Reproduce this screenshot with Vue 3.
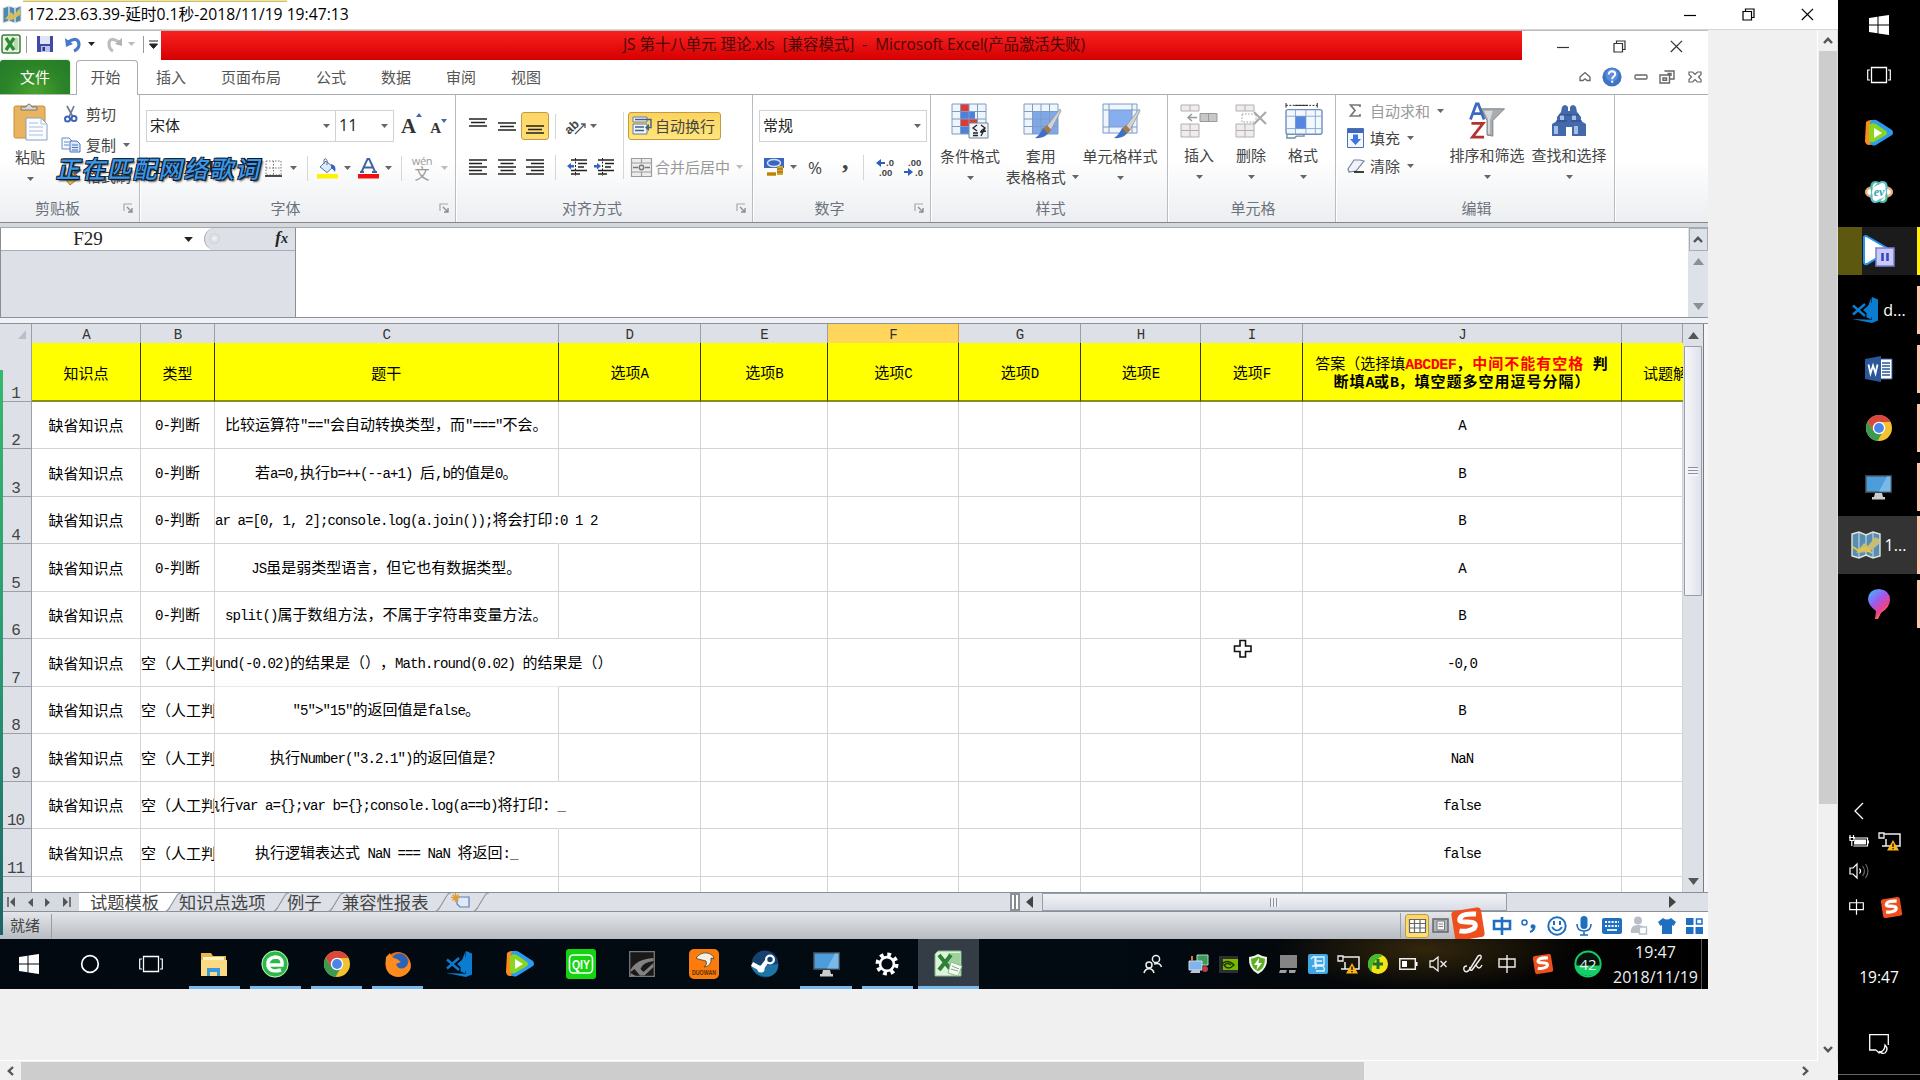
<script setup>
import { h } from 'vue'

const chrome = `<circle cx="14" cy="14" r="13" fill="#f2c230"/><path d="M14 14 2.7 7.6A13 13 0 0 1 25.3 7.6L14 8z" fill="#d9483b"/><path d="M2.7 7.6 8.2 17l5.8-3 0-6h11.3A13 13 0 0 0 2.7 7.6z" fill="#d9483b"/><path d="M2.7 7.6A13 13 0 0 0 12.5 26.9L17 19 14 17 8.200 17z" fill="#3a9a51"/><circle cx="14" cy="14" r="6.2" fill="#fff"/><circle cx="14" cy="14" r="4.9" fill="#4a86ea"/>`
const vscode = `<path d="M21 1 27 3.5v21L21 27 1 23l20 .8zM21 6.5v15l-9-7.5z" fill="#0a7dd0"/><path d="M2 9.5 14 20M2 18.500 14 8" stroke="#0a7dd0" stroke-width="2.400" fill="none"/><path d="M20.500 1v22.500l-5-2V14z" fill="#0a7dd0"/>`
const tencent = `<path d="M2 3Q7-1 12 3L9 25Q2 28 1 22z" fill="#ff8a1c"/><path d="M6 3Q9-1 14 2L28 11Q30 14 28 16L12 26Q7 28 6 23z" fill="#2d9bf0"/><path d="M5 6Q8 3 12 5L22 12Q24 14 22 16L10 23Q5 24 5 20z" fill="#8ad61c"/><path d="M10 9l8 5-8 5z" fill="#fff"/>`
const monitor = `<path d="M1 2h27v18H1z" fill="#3b4248"/><path d="M2.500 3.500h24v15h-24z" fill="#4e9ddb"/><path d="M26.500 3.500v15h-5L15 18.500 23 3.500z" fill="#79b9e8"/><path d="M11 20h7l1 4h-9zM8 24h13v2.500H8z" fill="#c9cdd0"/>`
const sogou = `<g transform="rotate(-9 18 18)"><rect x="3" y="3" width="30" height="30" rx="4" fill="#ee4f1c"/><path d="M27.500 9.500Q12 6 10.500 12.500c-.8 4.500 14.500 2 14.500 7.500 0 5.500-11 5.500-16.500 3.500" fill="none" stroke="#fff" stroke-width="5"/></g>`
const net = `<path d="M6 4h17v12H9V9M5 16h11" fill="none" stroke="#eee" stroke-width="1.500"/><path d="M2 3h5v5H2z" fill="#111" stroke="#eee" stroke-width="1.300"/><path d="M16 10l6 10.500H10z" fill="#fdb515"/><path d="M16 13.500v3.500M16 18v1.300" stroke="#111" stroke-width="1.400"/>`
const grid = `<path d="M1 1h34v30H1z" fill="#eef5fd"/>`
const gridLines = `<path d="M1 1h34v30H1zM1 8.500h34M1 16h34M1 23.500h34M9.500 1v30M18 1v30M26.500 1v30" fill="none" stroke="#7e9cc2"/>`
const brush = `<path d="M37 6 24 23l4 4L38 8z" fill="#cfd3d6" stroke="#8a8e92" stroke-width=".7"/><path d="M24 22l4.500 5-4 4-5-5z" fill="#a77b48"/><path d="M20 25l5 5.500Q20 36 12 35q5-3 8-10z" fill="#3f70c4"/>`
const restore = `<path d="M1 3.500h8.500V12H1zM3.500 3.500V1H12v8.500H9.500" fill="none" stroke="currentColor" stroke-width="1.200"/>`
const grayCells = `<path d="M1 1h18v6H1zM10 1v6M1 20h18v13H1zM1 26.500h18M10 20v13" fill="#f0ecee" stroke="#b2afb2"/>`
const lines = (a) => `<path d="${a}" stroke="#222" stroke-width="1.500"/>`

const icons = {
  map: [20, 20, `<path d="M1 3 7 1l6 2 6-2v15l-6 2-6-2-6 2z" fill="#4d8ab3" stroke="#dce0dc"/><path d="M7 1v15M13 3v15" stroke="#f4f4e8" stroke-width="1.200"/><path d="M3 14 9 7l3 3 6-7v7l-8 5z" fill="#d9bd57"/>`],
  min: [12, 12, `<path d="M0 6.500h12" stroke="currentColor" stroke-width="1.200"/>`],
  restore: [13, 13, restore],
  close: [13, 13, `<path d="M.8.8 12 12M12 .8.8 12" stroke="currentColor" stroke-width="1.200"/>`],
  xl: [20, 20, `<rect x="1" y="1" width="18" height="18" rx="2" fill="#e5f3e0" stroke="#3c7d3e" stroke-width="1.500"/><path d="M13 4h4v12h-4z" fill="#b9dbb4"/><path d="M5 4 13 16M13 4 5 16" stroke="#2e8a32" stroke-width="3.200"/>`],
  save: [18, 18, `<path d="M1 1h16v16H1z" fill="#4149a8"/><path d="M4 1h10v8H4z" fill="#dfe4f5"/><path d="M5 11h9v6H5z" fill="#b9c2e6"/><path d="M6.500 12H9v4H6.500z" fill="#303880"/>`],
  undo: [17, 17, `<path d="M3 6Q13 0 14 8q0 5-5 7" fill="none" stroke="#4779c9" stroke-width="3.200"/><path d="M0 2l1 9 7-3z" fill="#4779c9"/>`],
  redo: [17, 17, `<path d="M13 6Q3 0 3 8q0 5 4 7" fill="none" stroke="#bdbdbd" stroke-width="3.200"/><path d="M16 2v8l-7-2z" fill="#b2b2b2"/>`],
  dn: [7, 4, `<path d="M0 0h7L3.500 4z" fill="currentColor"/>`],
  qat: [9, 9, `<path d="M0 1h9M.5 4h8L4.500 8.500z" fill="#222" stroke="#222"/>`],
  up: [12, 11, `<path d="M1 6 6 1.500 11 6v3.500H8L6 7.800 4 9.500H1z" fill="#fff" stroke="#666" stroke-width="1.300"/>`],
  help: [20, 20, `<circle cx="10" cy="10" r="9.600" fill="#3f74c4"/><circle cx="10" cy="8" r="6.500" fill="#5a8ddb"/><path d="M6.800 7.500Q7 4.300 10.200 4.300q3 .1 3 2.800 0 1.500-1.700 2.600Q10.200 10.500 10.200 12.200M10.200 13.800v2" fill="none" stroke="#fff" stroke-width="2"/>`],
  bmin: [14, 6, `<rect x="1" y="1" width="12" height="4" rx="1" fill="#fff" stroke="#666" stroke-width="1.300"/>`],
  brest: [16, 14, `<path d="M5.500 1H15v8h-4M1 5h9.500v8H1zM4 8h3.500v2.200H4zM8.500 3.500H12V6" fill="none" stroke="#666" stroke-width="1.400"/>`],
  bx: [14, 12, `<path d="M1 1h3.500L7 3.500 9.500 1H13v2.500L10.500 6 13 8.500V11H9.500L7 8.500 4.500 11H1V8.500L3.500 6 1 3.500z" fill="#fff" stroke="#666" stroke-width="1.200"/>`],
  paste: [36, 38, `<rect x="1" y="3" width="31" height="32" rx="2" fill="#e8b45e" stroke="#c78c34"/><path d="M8 7V4h5q3-6 6 0h5v3z" fill="#d8d8d8" stroke="#777"/><path d="M13 15h15l6 6v16H13z" fill="#fafcff" stroke="#8aa0bf"/><path d="M28 15v6h6M16 20h9M16 24h14M16 28h14M16 32h14" stroke="#a9bdd8" fill="none"/>`],
  cut: [14, 18, `<path d="M3 1 9 12M10 1 5 12" stroke="#6c7a94" stroke-width="1.700"/><circle cx="3.500" cy="14" r="2.500" fill="none" stroke="#3b65b5" stroke-width="2"/><circle cx="10" cy="13.500" r="2.500" fill="none" stroke="#3b65b5" stroke-width="2"/>`],
  copy: [20, 16, `<path d="M1 1h7l3 3v8H1z" fill="#f4f8ff" stroke="#6a8cc4"/><path d="M3 5h5M3 8h5" stroke="#6a8cc4"/><path d="M9 4h7l3 3v8H9z" fill="#dbe7fa" stroke="#4d74b5"/><path d="M11 8h6M11 10.500h6M11 13h6" stroke="#4d74b5"/>`],
  painter: [20, 18, `<path d="M12 6 17 0l3 3-6 6z" fill="#53607c"/><path d="M1 8h14l3 3-9 7z" fill="#e3bb52" stroke="#a9812a"/>`],
  launch: [10, 10, `<path d="M1 8V1h8" fill="none" stroke="#a4a8ae" stroke-width="1.200"/><path d="M4 4l4.500 4.500M9 5v4H5" fill="none" stroke="#8a8e94" stroke-width="1.400"/>`],
  border: [17, 17, `<path d="M1 1h15v14H1zM8.500 1v14M1 8h15" fill="none" stroke="#777" stroke-dasharray="1.500 1.500"/><path d="M0 16h17" stroke="#222" stroke-width="1.600"/>`],
  bucket: [21, 21, `<path d="M0 16h21v4.500H0z" fill="#fff200"/><path d="M3 9l6-6 7 6-6 5.500z" fill="#dce9f8" stroke="#54719f"/><path d="M7 6V1.500q2-2 3 1V7" fill="none" stroke="#54719f"/><path d="M14 6q6 1 4 8-2-3-4-4z" fill="#3967b5"/>`],
  fcolor: [21, 21, `<path d="M0 16h21v4.500H0z" fill="#f01010"/><path d="M3.500 14 9.500 1h1.700l6 13M6 9.500h8.500M2 14h4M14 14h5" fill="none" stroke="#3e63a5" stroke-width="1.900"/>`],
  alT: [18, 18, lines('M0 2h18M2 5.500h14M0 9h18')],
  alM: [18, 18, lines('M0 6h18M2 9.500h14M0 13h18')],
  alB: [18, 18, lines('M0 9h18M2 12.500h14M0 16h18')],
  jL: [18, 16, lines('M0 1h18M0 4.500h13M0 8h18M0 11.500h13M0 15h18')],
  jC: [18, 16, lines('M0 1h18M2.500 4.500h13M0 8h18M2.500 11.500h13M0 15h18')],
  jR: [18, 16, lines('M0 1h18M5 4.500h13M0 8h18M5 11.500h13M0 15h18')],
  orient: [20, 20, `<text x="-3" y="14" transform="rotate(-42 6 10)" font-size="12.500" font-weight="bold" font-family="Liberation Sans" fill="#444">ab</text><path d="M8 18 18 8M18 12V8h-4" fill="none" stroke="#555" stroke-width="1.300"/>`],
  outd: [20, 18, `<path d="M4 2h16M11 5.500h9M11 9h6M4 12.500h16M4 16h9" stroke="#222" stroke-width="1.700"/><path d="M8.500 0v18" stroke="#222" stroke-dasharray="2 1.500"/><path d="M0 8l4-3v2h3v2.500H4v2z" fill="#3564c0"/>`],
  ind: [20, 18, `<path d="M4 2h16M11 5.500h9M11 9h6M4 12.500h16M4 16h9" stroke="#222" stroke-width="1.700"/><path d="M8.500 0v18" stroke="#222" stroke-dasharray="2 1.500"/><path d="M7 8 3 5v2H0v2.500h3v2z" fill="#3564c0"/>`],
  wrap: [21, 20, `<path d="M1 1h14v5H1zM1 8h14v10H1z" fill="#eef3f8" stroke="#6a7f96"/><path d="M3 3.500h16v8h-3M3 11h9M3 14.500h9" fill="none" stroke="#41618c" stroke-width="1.400"/><path d="M17 8v7l-4-3.500z" fill="#41618c"/>`],
  merge: [21, 19, `<path d="M.5.500h20v18H.5zM.5 5h20M.5 14h20M10.500 0v5M10.500 14v5" fill="#ececec" stroke="#9c9c9c" stroke-width="1.200"/><path d="M2 9.500h5M14 9.500h5" stroke="#777" stroke-width="1.500"/><circle cx="10.500" cy="9.500" r="2.200" fill="none" stroke="#777" stroke-width="1.500"/>`],
  money: [22, 21, `<path d="M1 1h20v10H1z" fill="#3b66bd"/><ellipse cx="11" cy="6" rx="6.500" ry="3.500" fill="none" stroke="#cfe0ff" stroke-width="1.500"/><path d="M14 9h6v9h-6zM4 15h9v4H4z" fill="#d8a328"/><path d="M14 12h6M14 15h6M4 17h9" stroke="#8c6414"/>`],
  cond: [38, 37, grid + `<path d="M9.500 1H18v7.500H9.500zM9.500 16H26v7.500H9.500z" fill="#e03b30"/><path d="M9.500 8.500H24V16H9.500zM9.500 23.500H18V31H9.500z" fill="#4d80dd"/>` + gridLines + `<path d="M18 20h19v15H18z" fill="#eff5f8" stroke="#6b8696"/><path d="M26 22l-4 3 4 3M22 30h5M22 32.500h5M30 22l4 3-4 3M29 29l6-1M30 33l4-8" fill="none" stroke="#222" stroke-width="1.300"/>`],
  table: [38, 37, grid + `<path d="M9.500 8.500H35V31H9.500z" fill="#7fa7ea"/>` + gridLines + brush],
  style: [38, 37, grid + `<path d="M7 7h23v17H7z" fill="#86aef0"/><path d="M1 1h34v29H1zM1 7h34M7 1v29M30 1v29M1 24h34" fill="none" stroke="#7e9cc2"/>` + brush],
  insC: [38, 34, grayCells + `<path d="M20 9.500h17v8H20zM28.500 9.500v8" fill="#c7c7c7" stroke="#999"/><path d="M8 13.500h9M12 10l-4 3.500 4 3.500" fill="none" stroke="#999" stroke-width="1.500"/>`],
  delC: [32, 34, grayCells + `<path d="M7 10h14v8H7z" fill="none" stroke="#999" stroke-dasharray="1.500 1.500"/><path d="M19 8 31 20M31 8 19 20" stroke="#aaa" stroke-width="2.200"/>`],
  fmtC: [40, 38, `<path d="M1 2.500h33" stroke="#222" stroke-dasharray="2 1.500" /><path d="M10 2.500h14M1 0v5M34 0v5" stroke="#222"/><rect x="1" y="7" width="38" height="26" rx="2" fill="#f3f8fe" stroke="#6f90bc" stroke-width="1.500"/><path d="M1 14h38M1 27h38M11 7v26M22 7v26M32 7v26" stroke="#8aa9d2"/><path d="M11 14h11v13H11z" fill="#5587df"/><path d="M2 33v4h8l2-2h8v-2" fill="none" stroke="#6f8f98" stroke-width="1.500"/>`],
  sigma: [12, 13, `<path d="M11 3V1H1.500L6 6.500 1.500 12H11v-2" fill="none" stroke="#777" stroke-width="1.700"/>`],
  fill: [17, 20, `<path d="M.5.500h16v19H.5z" fill="#f2f7ff" stroke="#4d72b3"/><path d="M1 1h15v4H1z" fill="#3f69b8"/><path d="M6 6.500h5V11h3l-5.500 6L3 11h3z" fill="#3e74df"/>`],
  eraser: [18, 15, `<path d="M7 2h6l4 1-8 10-7 1-1-3z" fill="#eff3f8" stroke="#74829b" stroke-width="1.200"/><path d="M7 14h10" stroke="#111" stroke-width="1.600"/>`],
  sort: [37, 37, `<path d="M12 6h24L24 18v16l-6-1V18z" fill="#a9adb0" stroke="#7e8285"/><path d="M15 8h9l-3 10v14l-2-1V17z" fill="#d7dadc"/><path d="M1 17 7 1h2l6 16M4 11h8" fill="none" stroke="#3c6ac0" stroke-width="2.800"/><path d="M2 21h12L3 35h12" fill="none" stroke="#b2332f" stroke-width="2.800"/>`],
  find: [36, 34, `<path d="M11 3q3-4 6 0v4h2V3q3-4 6 0l1 5 4 5v4l5 3v12H21v-9h-6v9H1V20l5-3v-4l4-5z" fill="#4469aa"/><path d="M3 22h4v8H3zM23 22h4v8h-4zM9 11h4v5H9zM21 11h4v5h-4z" fill="#a6bfe6"/><path d="M5 17h11M20 17h11M8 11h20" stroke="#2a4882"/>`],
  inc: [20, 19, `<path d="M0 5l5-4v3h4v2H5v3z" fill="#2f5cc0"/><text x="10" y="8" font-size="9.500" font-family="Liberation Sans" font-weight="bold" fill="#444">.0</text><text x="3" y="18" font-size="9.500" font-family="Liberation Sans" font-weight="bold" fill="#444">.00</text>`],
  dec: [20, 19, `<path d="M9 14l-5-4v3H0v2h4v3z" fill="#2f5cc0"/><text x="4" y="8" font-size="9.500" font-family="Liberation Sans" font-weight="bold" fill="#444">.00</text><text x="11" y="18" font-size="9.500" font-family="Liberation Sans" font-weight="bold" fill="#444">.0</text>`],
  triU: [11, 7, `<path d="M0 7h11L5.500 0z" fill="currentColor"/>`],
  triD: [11, 7, `<path d="M0 0h11L5.500 7z" fill="currentColor"/>`],
  triL: [7, 12, `<path d="M7 0v12L0 6z" fill="currentColor"/>`],
  triR: [7, 12, `<path d="M0 0v12l7-6z" fill="currentColor"/>`],
  first: [9, 10, `<path d="M1 0v10" stroke="#555" stroke-width="1.500"/><path d="M8 0v10L3 5z" fill="#555"/>`],
  last: [9, 10, `<path d="M8 0v10" stroke="#555" stroke-width="1.500"/><path d="M1 0v10l5-5z" fill="#555"/>`],
  prev: [5, 9, `<path d="M5 0v9L0 4.500z" fill="#555"/>`],
  next: [5, 9, `<path d="M0 0v9l5-4.500z" fill="#555"/>`],
  cU: [10, 7, `<path d="M1 6l4-4.200L9 6" fill="none" stroke="currentColor" stroke-width="2.400"/>`],
  cD: [10, 7, `<path d="M1 1l4 4.200L9 1" fill="none" stroke="currentColor" stroke-width="2.400"/>`],
  cL: [7, 10, `<path d="M6 1 1.800 5 6 9" fill="none" stroke="currentColor" stroke-width="2.400"/>`],
  cR: [7, 10, `<path d="M1 1l4.200 4L1 9" fill="none" stroke="currentColor" stroke-width="2.400"/>`],
  slant: [17, 19, `<path d="M0 19Q4 18 6 14L12 4Q14 0 17 0" fill="none" stroke="#9298a0" stroke-width="1.200"/>`],
  slantW: [17, 19, `<path d="M0 0h17Q14 0 12 4L6 14Q4 18 0 19z" fill="#fff"/><path d="M0 19Q4 18 6 14L12 4Q14 0 17 0" fill="none" stroke="#9298a0" stroke-width="1.200"/>`],
  newsheet: [19, 17, `<path d="M6 4h12v10H9l-3-3z" fill="#dfe9f7" stroke="#5f80b3" stroke-width="1.200"/><path d="M4.500 0v9M0 4.500h9M1.500 1.500l6 6M7.500 1.500l-6 6" stroke="#e59a2c" stroke-width="1.300"/>`],
  vgrid: [17, 14, `<path d="M.5.500h16v13H.5zM0 4.500h17M0 9h17M5.500 0v14M11 0v14" fill="#fff" stroke="#666" stroke-width="1.200"/>`],
  vpage: [17, 15, `<path d="M1 1h15v13H1z" fill="#aeb5bd" stroke="#666" stroke-width="1.500"/><path d="M5 3h7.500v9H5z" fill="#f5f5f5" stroke="#777"/><path d="M6.500 6h4.500M6.500 8.500h4.500" stroke="#888"/>`],
  sogou: [36, 36, sogou],
  zh: [20, 20, `<path d="M2 5h16v8H2zM10 1v18" fill="none" stroke="currentColor" stroke-width="var(--sw,1.400)"/>`],
  deg: [16, 14, `<circle cx="3.500" cy="3.500" r="2.500" fill="none" stroke="#1f6fc0" stroke-width="1.500"/><path d="M9 13q5-2 4.500-6.500" fill="none" stroke="#1f6fc0" stroke-width="2"/><circle cx="11.800" cy="7.500" r="2.300" fill="#1f6fc0"/>`],
  smile: [20, 20, `<circle cx="10" cy="10" r="8.700" fill="none" stroke="#1f6fc0" stroke-width="2"/><path d="M7 5v4M13 5v4" stroke="#1f6fc0" stroke-width="2"/><path d="M5 11q5 7 10 0" fill="none" stroke="#1f6fc0" stroke-width="1.700"/>`],
  mic: [16, 20, `<rect x="4.500" y="0" width="7" height="13" rx="3.500" fill="#1f6fc0"/><path d="M1 8q0 7 7 7t7-7M8 15v4M4 19h8" fill="none" stroke="#1f6fc0" stroke-width="1.600"/>`],
  kbd: [20, 16, `<rect width="20" height="16" rx="2" fill="#1f6fc0"/><path d="M3 4h14M3 8h14" stroke="#fff" stroke-width="2" stroke-dasharray="2 1.300"/><path d="M5 12h10" stroke="#fff" stroke-width="1.700"/>`],
  person: [18, 19, `<circle cx="8" cy="4.500" r="4" fill="#b9bfc9"/><path d="M1 17q-1-8 7-8 5 0 6 3v5z" fill="#b9bfc9"/><path d="M9.500 11h7v7h-7z" fill="#fff" stroke="#b9bfc9" stroke-width="1.400"/>`],
  shirt: [18, 18, `<path d="M5 1q4 3 8 0l5 4-2.500 4L14 8v9H4V8L2.500 9 0 5z" fill="#1f6fc0"/>`],
  apps: [17, 16, `<path d="M0 0h7.500v7H0zM0 9h7.500v7H0zM9.500 9H17v7H9.500z" fill="#1f6fc0"/><path d="M10.500 1H16v5h-5.500z" fill="none" stroke="#1f6fc0" stroke-width="1.500"/>`],
  win: [20, 20, `<path d="M0 3 8.500 1.800V9.500H0zM9.500 1.600 20 0v9.500H9.500zM0 10.500h8.500v7.700L0 17zM9.500 10.500H20V20L9.500 18.400z" fill="#fff"/>`],
  cortana: [20, 20, `<circle cx="10" cy="10" r="8.300" fill="none" stroke="#fff" stroke-width="1.700"/>`],
  task: [24, 18, `<path d="M4.500 1.500h15v15h-15z" fill="none" stroke="#fff" stroke-width="1.300"/><path d="M3 4H.7v10H3M21 4h2.300v10H21" fill="none" stroke="#fff" stroke-width="1.200"/>`],
  folder: [28, 26, `<path d="M1 2h10l2 3h13v19H1z" fill="#e9ba4a"/><path d="M3 6h21v10H3z" fill="#fff3c4"/><path d="M1 9h26v16H1z" fill="#fadb83"/><path d="M7 17h13v8h-3v-4h-7v4H7z" fill="#3a9ae0"/>`],
  browser: [28, 28, `<circle cx="14" cy="14" r="13.500" fill="#2db84a"/><circle cx="14" cy="14" r="13" fill="none" stroke="#bff0b8"/><path d="M6 15h15q1-8-7-8-8 1-7 9 2 7 13 4" fill="none" stroke="#fff" stroke-width="3.400"/>`],
  chrome: [28, 28, chrome],
  firefox: [28, 28, `<circle cx="14" cy="14.500" r="12.500" fill="#f0691a"/><circle cx="15.500" cy="12" r="8.500" fill="#2a63b8"/><path d="M2 7l4-4q1 5 7 6l4 3-5 2q2 6 8 4 5-3 5-8 3 5 1 10-6 9-16 6Q0 23 2 7z" fill="#ff8a1e"/>`],
  vscode: [28, 28, vscode],
  tencent: [30, 28, tencent],
  qiy: [30, 30, `<rect width="30" height="30" rx="3" fill="#14d411"/><rect x="3.500" y="6" width="23" height="18" rx="4" fill="none" stroke="#fff" stroke-width="1.600"/><text x="6" y="20" font-family="Liberation Sans" font-weight="bold" font-size="12.500" fill="#fff" textLength="18" lengthAdjust="spacingAndGlyphs">QIY</text>`],
  nvg: [26, 26, `<path d="M.7.700h24.600v24.600H.7z" fill="#191919" stroke="#777" stroke-width="1.300"/><path d="M1.500 19Q7 8 24.500 7v3Q14 11 11.500 18l3 3 10-9v4l-9 8.500H11L5.500 18 1.500 21zM1.500 22l5 3h-5z" fill="#828282"/>`],
  duo: [30, 30, `<rect width="30" height="30" rx="5" fill="#fb7c0c"/><path d="M7 9Q12 3 18 4q6 1 7 6l-3-1q1 8-7 9 4-3 2-6l-8-2z" fill="#f6efe6" stroke="#443" stroke-width=".8"/><text x="3" y="26" font-family="Liberation Sans" font-weight="bold" font-size="7" fill="#5a3000" textLength="24" lengthAdjust="spacingAndGlyphs">DUOWAN</text>`],
  steam: [28, 28, `<circle cx="14" cy="14" r="13.500" fill="#16406e"/><path d="M0 17Q7 29 20 26 28 22 27 14z" fill="#1c74a8"/><path d="M1 14l9 5 6-8" fill="none" stroke="#fff" stroke-width="4.500"/><circle cx="19" cy="9.500" r="5" fill="#fff"/><circle cx="19" cy="9.500" r="2.700" fill="#16406e"/><circle cx="10" cy="19" r="3.600" fill="#fff"/>`],
  monitor: [29, 28, monitor],
  gear: [24, 24, `<circle cx="12" cy="12" r="9.500" fill="none" stroke="#fff" stroke-width="4" stroke-dasharray="3.730 3.730"/><circle cx="12" cy="12" r="6.900" fill="none" stroke="#fff" stroke-width="2.600"/>`],
  xlBig: [28, 28, `<path d="M4 1h23v25H1V4z" fill="#dff2da" stroke="#7fb884"/><path d="M14 3h12v15H14z" fill="#9dd39b"/><path d="M5 5 17 20M17 5 5 20" stroke="#2d8136" stroke-width="4"/><path d="M17 12l11 4-4 10-10-3z" fill="#f6fbf4" stroke="#8fb894"/><path d="M18 16l7 3M17 19l7 2" stroke="#7ea884"/>`],
  people: [20, 20, `<circle cx="13" cy="5" r="3.600" fill="none" stroke="#eee" stroke-width="1.500"/><circle cx="6" cy="11" r="3" fill="none" stroke="#eee" stroke-width="1.500"/><path d="M1 19q1-4 5-4.500 4 .5 5 4.500M11 10q6-2 7.500 3" fill="none" stroke="#eee" stroke-width="1.500"/>`],
  pcs: [20, 20, `<path d="M9 1h11v10H9z" fill="#3b9a57" stroke="#b9d4c4"/><path d="M1 7h13v9H1z" fill="#7fb4ec" stroke="#cde"/><path d="M4 16h8v3H2z" fill="#bcc6d2"/><circle cx="17" cy="15" r="3" fill="#b3404a"/><path d="M4 2v5" stroke="#d67a34" stroke-width="2"/>`],
  nv: [19, 19, `<path d="M0 1h19v17H0z" fill="#2c2f36"/><path d="M4 4h15v11H4z" fill="#76b900"/><path d="M2 10q6-7 13 0-6 6-10 0 4-3 7 0" fill="none" stroke="#213500" stroke-width="1.400"/>`],
  shield: [20, 20, `<path d="M10 0q5 3 9 3 1 12-9 17Q0 15 1 3q4 0 9-3z" fill="#eff6e9"/><path d="M10 2.500q4 2 7 2.300Q17 14 10 17.500 3 14 3 4.800q3-.3 7-2.300z" fill="#5fae24"/><path d="M11 4 6 11h3.500L8.500 16l5.500-7h-3.500z" fill="#fff"/>`],
  grayPc: [18, 18, `<path d="M1 0h17v13H1z" fill="#858585"/><path d="M1 15h7l-1 3H0zM10 15h7l-1 3h-6z" fill="#a0a0a0"/>`],
  blue: [20, 20, `<rect width="20" height="20" rx="2" fill="#3fa7e6"/><path d="M3 5q4-5 5 0v10M7 3h9v8H7zM9 7h5M4 12h10q3 1 2 5H8" fill="none" stroke="#e6f5ff" stroke-width="1.300"/>`],
  net: [24, 22, net],
  plus: [20, 20, `<circle cx="10" cy="10" r="10" fill="#f4e416"/><path d="M10 0A10 10 0 0 0 4 18Q2 8 15 1.500 12 0 10 0z" fill="#49b82c"/><path d="M10 5v10M5 10h10" stroke="#1c7426" stroke-width="3"/>`],
  batt: [19, 12, `<path d="M.8.800h15.500v10.400H.8z" fill="none" stroke="#eee" stroke-width="1.500"/><path d="M3 3h5v6H3zM17 4h1.500v4H17z" fill="#fff"/>`],
  mute: [18, 16, `<path d="M1 5h3l5-4v14l-5-4H1z" fill="none" stroke="#eee" stroke-width="1.300"/><path d="M11.500 5l6 6M17.500 5l-6 6" stroke="#eee" stroke-width="1.300"/>`],
  pen: [20, 20, `<path d="M4 12Q0 12 1 16q2 4 6-1L15 2q4-2 3 2L9 16q-3 1-2-3M13 11q3 6 6 0" fill="none" stroke="#eee" stroke-width="1.500"/>`],
  c42: [28, 28, `<circle cx="14" cy="14" r="12.600" fill="#06130c" stroke="#12cf68" stroke-width="2"/><path d="M1.500 15.500 27 15.500A13 13 0 0 1 1.500 15.500z" fill="#12cf68"/><text x="14" y="19.500" text-anchor="middle" font-family="Open Sans" font-size="15" fill="#e8f5ec">42</text>`],
  ev: [30, 28, `<g fill="none" stroke-width="2.200" stroke="#d8f0ea"><ellipse cx="15" cy="14" rx="13" ry="6" fill="#fff" stroke="#e6b07a"/><ellipse cx="15" cy="14" rx="11" ry="6" fill="#fff" stroke="#4fb99a" transform="rotate(60 15 14)"/><ellipse cx="15" cy="14" rx="11" ry="6" fill="#fff" stroke="#63c1cf" transform="rotate(120 15 14)"/></g><circle cx="15" cy="14" r="7" fill="#fff"/><text x="15" y="18" text-anchor="middle" font-family="Liberation Serif" font-style="italic" font-weight="bold" font-size="12" fill="#3aa3b9">ev</text>`],
  player: [32, 32, `<path d="M1 2Q2 0 5 2L24 13Q26 15 24 17L4 29Q1 30 1 27z" fill="#fff" stroke="#2492ee" stroke-width="2"/><path d="M13 13h18v18H13z" fill="#c9cbf5" stroke="#7b7fd0" stroke-width="1.500"/><path d="M19.500 18v8M24.500 18v8" stroke="#3b47c4" stroke-width="2.600"/>`],
  word: [28, 28, `<path d="M14 4h13v20H14z" fill="#fff" stroke="#2b579a"/><path d="M17 8h8M17 11h8M17 14h8M17 17h8M17 20h8" stroke="#2b579a" stroke-width="1.400"/><path d="M0 4 16 1v26L0 24z" fill="#2b579a"/><path d="M3.500 9.500 5.500 18.500 8 10.500 10.500 18.500 12.500 9.500" fill="none" stroke="#fff" stroke-width="1.800"/>`],
  mapBig: [30, 28, `<path d="M1 3 8 1l7 3 7-3 7 2v22l-7 2-7-3-7 3-7-2z" fill="#578db0" stroke="#e4e4de" stroke-width="1.400"/><path d="M8 1v25M15 4v20M22 1v25" stroke="#d6e2e6"/><path d="M5 22 13 12l4 3 7-9 4 2v5l-10 8z" fill="#c9bd6f"/><path d="M2 16l6 4 6-3 7 5" stroke="#e3c645" stroke-width="2" fill="none"/>`],
  balloon: [24, 32, `<defs><linearGradient id="bal" x1="0" y1="0" x2=".7" y2="1"><stop offset="0" stop-color="#31c6ff"/><stop offset=".45" stop-color="#9a5cf0"/><stop offset=".75" stop-color="#ee3f8a"/><stop offset="1" stop-color="#ffb021"/></linearGradient></defs><path d="M12 1q11 1 11 11 0 7-9 13l-3 6-3 0 1-8Q1 17 1 11 2 1 12 1z" fill="url(#bal)"/>`],
  chev: [10, 18, `<path d="M9 1 1 9l8 8" fill="none" stroke="#fff" stroke-width="1.300"/>`],
  charge: [20, 14, `<path d="M4 4h14.500v8H4.500" fill="none" stroke="#fff" stroke-width="1.200"/><path d="M6 5.500h11v5H5V8zM19 6.500h1v3h-1z" fill="#fff"/><path d="M1 1v2M4.500 1v2M0 3.500h6M1 4v2.500h4V4M2.800 7v5" stroke="#fff" fill="none" stroke-width="1.200"/>`],
  vol: [20, 16, `<path d="M1 5h3l4-4v14l-4-4H1z" fill="none" stroke="#fff" stroke-width="1.200"/><path d="M10.500 5.500q2 2.500 0 5" fill="none" stroke="#fff" stroke-width="1.200"/><path d="M13.500 3q4 5 0 10M16.500 1q5 7 0 14" fill="none" stroke="#666" stroke-width="1.200"/>`],
  note: [20, 20, `<path d="M7 16H.7V.7h18.600V11M7 16l3 3 1-2" fill="none" stroke="#fff" stroke-width="1.300"/><path d="M16 11q4 4 0 8-3 1-5-1 5-1 5-7z" fill="none" stroke="#fff" stroke-width="1.300"/>`],
  cross: [20, 20, `<path d="M7 1.500h5.500V7H18v5.500h-5.500V18H7v-5.500H1.500V7H7z" fill="#fff" stroke="#111" stroke-width="1.600"/>`],
  corner: [8, 9, `<path d="M8 0v9H0z" fill="#b9bfc6"/>`]
}

const Icon = (p) => {
  const [w, ht, body] = icons[p.n]
  return h('svg', { width: p.w || w, height: p.h || ht, viewBox: `0 0 ${w} ${ht}`, innerHTML: body, class: 'ic' })
}
Icon.props = ['n', 'w', 'h']

// Splits text into full-width and half-width runs so both keep the 2:1 cell grid
const Mixed = (p) =>
  h('span', { class: 'mixed' }, (p.t.match(/[\x20-\x7e]+|[^\x20-\x7e]+/g) || []).map((s) => h('span', { class: /[\x20-\x7e]/.test(s) ? 'lat' : 'han' }, s)))
Mixed.props = ['t']

const menu = ['插入', '页面布局', '公式', '数据', '审阅', '视图']
const fontTools = [[28, 'B'], [27, 'I'], [27, 'U'], [34], [22, null, 'border'], [18, null, 'dn'], [10, '|'], [30, null, 'bucket'], [11, null, 'dn'], [31, null, 'fcolor'], [9, null, 'dn'], [16, '|']]
const letters = ['A', 'B', 'C', 'D', 'E', 'F', 'G', 'H', 'I', 'J', '']
const heads = ['知识点', '类型', '题干', '选项A', '选项B', '选项C', '选项D', '选项E', '选项F']
const J = '0-判断'
const K = '空（人工判'
const rows = [
  { b: J, c: '比较运算符"=="会自动转换类型，而"==="不会。', j: 'A' },
  { b: J, c: '若a=0,执行b=++(--a+1) 后,b的值是0。', j: 'B' },
  { b: J, c: 'ar a=[0, 1, 2];console.log(a.join());将会打印:0 1 2', j: 'B', over: true },
  { b: J, c: 'JS虽是弱类型语言，但它也有数据类型。', j: 'A' },
  { b: J, c: 'split()属于数组方法，不属于字符串变量方法。', j: 'B' },
  { b: K, c: 'und(-0.02)的结果是（），Math.round(0.02) 的结果是（）', j: '-0,0', over: true },
  { b: K, c: '"5">"15"的返回值是false。', j: 'B' },
  { b: K, c: '执行Number("3.2.1")的返回值是？', j: 'NaN' },
  { b: K, c: '执行var a={};var b={};console.log(a==b)将打印：_', j: 'false', over: true, cut: true },
  { b: K, c: '执行逻辑表达式 NaN === NaN 将返回:_', j: 'false' }
]
const apps = [['win'], ['cortana'], ['task'], ['folder', 1], ['browser', 1], ['chrome', 1], ['firefox', 1], ['vscode'], ['tencent'], ['qiy'], ['nvg'], ['duo'], ['steam'], ['monitor', 1], ['gear', 1], ['xlBig', 2]]
const tray = ['people', 'pcs', 'nv', 'shield', 'grayPc', 'blue', 'net', 'plus', 'batt', 'mute', 'pen', 'zh', 'sogou', 'c42']
const ime = ['zh', 'deg', 'smile', 'mic', 'kbd', 'person', 'shirt', 'apps']
const side = [
  { n: 'win', h: 50 }, { n: 'task', h: 50 }, { n: 'tencent', h: 65 }, { n: 'ev', h: 54 },
  { n: 'player', h: 48, k: 'play' }, { n: 'vscode', h: 48, t: 'd...', k: 'run' }, { n: 'word', h: 48, k: 'run' },
  { n: 'chrome', h: 48, k: 'run' }, { n: 'monitor', h: 48, k: 'run' }, { n: 'mapBig', h: 58, t: '1...', k: 'sel' }, { n: 'balloon', h: 48, k: 'run last' }
]
</script>

<template>
  <div class="desktop">
    <div class="viewer">
      <header class="vbar">
        <i class="strip"></i>
        <Icon n="map" />
        <span class="vtitle">172.23.63.39-延时0.1秒-2018/11/19 19:47:13</span>
        <div class="vbtns"><Icon n="min" /><Icon n="restore" /><Icon n="close" /></div>
      </header>
      <div class="vbody">
        <div class="canvas">
          <div class="remote">
            <div class="excel">
              <div class="xtitle">
                <div class="qat">
                  <Icon n="xl" /><i class="sp"></i><Icon n="save" /><Icon n="undo" /><Icon n="dn" class="a1" /><Icon n="redo" /><Icon n="dn" class="a2" /><i class="sp"></i><Icon n="qat" />
                </div>
                <div class="red">JS 第十八单元 理论.xls&nbsp; [兼容模式]&nbsp; -&nbsp; Microsoft Excel(产品激活失败)</div>
                <div class="xbtns"><Icon n="min" /><Icon n="restore" /><Icon n="close" /></div>
              </div>
              <div class="tabs">
                <div class="file">文件</div>
                <div class="tab on">开始</div>
                <div class="menu"><span v-for="m in menu" :key="m">{{ m }}</span></div>
                <div class="helpers"><Icon n="up" /><Icon n="help" /><Icon n="bmin" /><Icon n="brest" /><Icon n="bx" /></div>
              </div>
              <div class="ribbon">
                <section class="grp g1">
                  <div class="body">
                    <div class="big"><Icon n="paste" /><span>粘贴</span><Icon n="dn" /></div>
                    <div class="clip">
                      <div><b><Icon n="cut" /></b>剪切</div>
                      <div><b><Icon n="copy" /></b>复制<Icon n="dn" class="ml" /></div>
                      <div><b><Icon n="painter" /></b>格式刷</div>
                    </div>
                  </div>
                  <footer class="l">剪贴板<Icon n="launch" class="la" /></footer>
                </section>
                <section class="grp g2">
                  <div class="body col">
                    <div class="line">
                      <div class="combo fn">宋体<Icon n="dn" /></div>
                      <div class="combo fs"><em>11</em><Icon n="dn" /></div>
                      <span class="grow">A<Icon n="triU" w="6" h="4" /></span>
                      <span class="shrink">A<Icon n="triD" w="6" h="4" /></span>
                    </div>
                    <div class="line">
                      <span v-for="(t, i) in fontTools" :key="i" class="slot" :style="{ width: t[0] + 'px' }">
                        <Icon v-if="t[2]" :n="t[2]" /><i v-else-if="t[1] === '|'" class="sep"></i><b v-else :class="'f' + t[1]">{{ t[1] }}</b>
                      </span>
                      <span class="wen"><small>wén</small>文</span><Icon n="dn" class="pale" />
                    </div>
                  </div>
                  <footer class="l">字体<Icon n="launch" class="la" /></footer>
                </section>
                <section class="grp g3">
                  <div class="body">
                    <div class="col alg">
                      <div class="line"><span class="s28"><Icon n="alT" /></span><span class="s28"><Icon n="alM" /></span><span class="s28 hot"><Icon n="alB" /></span><i class="sep"></i><Icon n="orient" class="ori" /><Icon n="dn" /></div>
                      <div class="line"><span class="s28"><Icon n="jL" /></span><span class="s28"><Icon n="jC" /></span><span class="s28"><Icon n="jR" /></span><i class="sep"></i><Icon n="outd" class="ori" /><Icon n="ind" class="ind" /></div>
                    </div>
                    <i class="sep tall"></i>
                    <div class="col">
                      <div class="line"><div class="wrapbtn"><Icon n="wrap" />自动换行</div></div>
                      <div class="line mrg"><Icon n="merge" />合并后居中<Icon n="dn" class="ml" /></div>
                    </div>
                  </div>
                  <footer class="l">对齐方式<Icon n="launch" class="la" /></footer>
                </section>
                <section class="grp g4">
                  <div class="body col">
                    <div class="line"><div class="combo nf">常规<Icon n="dn" /></div></div>
                    <div class="line num"><Icon n="money" /><Icon n="dn" /><span class="pct">%</span><span class="comma">,</span><i class="sep"></i><Icon n="inc" /><Icon n="dec" /></div>
                  </div>
                  <footer class="l">数字<Icon n="launch" class="la" /></footer>
                </section>
                <section class="grp g5">
                  <div class="body">
                    <div class="big w78"><Icon n="cond" /><span>条件格式</span><Icon n="dn" /></div>
                    <div class="big w65"><Icon n="table" class="r2" /><span>套用</span><span class="second">表格格式 <Icon n="dn" /></span></div>
                    <div class="big w96"><Icon n="style" class="r2" /><span>单元格样式</span><Icon n="dn" /></div>
                  </div>
                  <footer>样式</footer>
                </section>
                <section class="grp g6">
                  <div class="body">
                    <div class="big"><Icon n="insC" h="36" /><span>插入</span><Icon n="dn" /></div>
                    <div class="big"><Icon n="delC" h="36" /><span>删除</span><Icon n="dn" /></div>
                    <div class="big"><Icon n="fmtC" class="r2" h="36" /><span>格式</span><Icon n="dn" /></div>
                  </div>
                  <footer>单元格</footer>
                </section>
                <section class="grp g7">
                  <div class="body">
                    <div class="edit">
                      <div class="dim"><b><Icon n="sigma" /></b>自动求和<Icon n="dn" /></div>
                      <div><b><Icon n="fill" /></b>填充<Icon n="dn" /></div>
                      <div><b><Icon n="eraser" /></b>清除<Icon n="dn" /></div>
                    </div>
                    <div class="big w81"><Icon n="sort" h="36" /><span>排序和筛选</span><Icon n="dn" /></div>
                    <div class="big w81"><Icon n="find" h="36" /><span>查找和选择</span><Icon n="dn" /></div>
                  </div>
                  <footer>编辑</footer>
                </section>
              </div>
              <div class="gap"></div>
              <div class="formula">
                <div class="left">
                  <div class="name"><span>F29</span><Icon n="dn" w="9" h="5" /><div class="fx"><i></i><em>f<small>x</small></em></div></div>
                </div>
                <div class="input"></div>
                <div class="fscroll"><div><Icon n="cU" /></div><Icon n="triU" /><Icon n="triD" class="dd" /></div>
              </div>
              <div class="gap g2nd"></div>
              <div class="sheetwrap">
                <div class="sheet">
                  <div class="row hd">
                    <div class="rn"><Icon n="corner" /></div>
                    <div v-for="(l, i) in letters" :key="i" :class="{ sel: l === 'F' }"><Mixed :t="l" /></div>
                  </div>
                  <div class="row top">
                    <div class="rn"><Mixed t="1" /></div>
                    <div v-for="t in heads" :key="t"><Mixed :t="t" /></div>
                    <div class="ans">
                      <p><Mixed t="答案（选择填" /><b><Mixed class="r" t="ABCDEF" /><Mixed t="，" /><Mixed class="r" t="中间不能有空格" /><Mixed t=" " />判</b></p>
                      <p><b><Mixed t="断填A或B，填空题多空用逗号分隔）" /></b></p>
                    </div>
                    <div class="k">试题解析</div>
                  </div>
                  <div v-for="(r, i) in rows" :key="i" class="row">
                    <div class="rn"><Mixed :t="String(i + 2)" /></div>
                    <div>缺省知识点</div>
                    <div class="b"><Mixed :t="r.b" /></div>
                    <div :class="{ over: r.over, cut: r.cut }"><Mixed :t="r.c" /></div>
                    <div v-for="n in 6" :key="n"></div>
                    <div><Mixed :t="r.j" /></div>
                    <div></div>
                  </div>
                  <div class="row"><div v-for="n in 12" :key="n" :class="{ rn: n === 1 }"></div></div>
                </div>
                <div class="vs"><Icon n="triU" /><div class="thumb"><i></i></div><Icon n="triD" class="end" /></div>
                <div class="edge"></div>
              </div>
              <div class="stabs">
                <div class="nav"><Icon n="first" /><Icon n="prev" /><Icon n="next" /><Icon n="last" /></div>
                <span class="st act">试题模板</span><Icon n="slantW" />
                <span class="st">知识点选项</span><Icon n="slant" class="s2" />
                <span class="st n2">例子</span><Icon n="slant" class="s3" />
                <span class="st n3">兼容性报表</span><Icon n="slant" class="s4" /><Icon n="newsheet" /><Icon n="slant" class="s5" />
                <div class="hs">
                  <div class="split"></div><Icon n="triL" />
                  <div class="hthumb"><i></i></div><Icon n="triR" class="end" />
                </div>
              </div>
              <div class="status">
                <span>就绪</span><i></i>
                <div class="views"><div class="hot"><Icon n="vgrid" /></div><Icon n="vpage" /></div>
                <div class="ime"><span v-for="n in ime" :key="n"><Icon :n="n" /></span></div>
              </div>
              <Icon n="sogou" class="sg" />
              <div class="wall"></div>
              <div class="lyric">正在匹配网络歌词</div>
              <Icon n="cross" class="cur" />
            </div>
            <div class="rtask">
              <div v-for="a in apps" :key="a[0]" class="app" :class="[a[0], { run: a[1], act: a[1] === 2 }]"><Icon :n="a[0]" /></div>
              <div class="tray"><span v-for="t in tray" :key="t" :class="t"><Icon :n="t" :w="t === 'sogou' ? 22 : undefined" :h="t === 'sogou' ? 22 : undefined" /></span></div>
              <div class="clock">19:47<br />2018/11/19</div>
            </div>
          </div>
        </div>
        <div class="vsb"><Icon n="cU" /><i></i><Icon n="cD" class="end" /></div>
      </div>
      <div class="hsb"><Icon n="cL" /><i></i><Icon n="cR" class="end" /></div>
    </div>
    <aside class="side">
      <div v-for="s in side" :key="s.n" class="si" :class="[s.k, { lab: s.t }]" :style="{ height: s.h + 'px' }"><Icon :n="s.n" /><span v-if="s.t">{{ s.t }}</span></div>
      <div class="stray">
        <span><Icon n="chev" /></span>
        <span><Icon n="charge" /></span><span><Icon n="net" /></span>
        <span><Icon n="vol" /></span>
        <span><Icon n="zh" w="17" h="18" /></span><span><Icon n="sogou" w="23" h="23" /></span>
      </div>
      <div class="sclock">19:47</div>
      <div class="snote"><Icon n="note" /></div>
      <div class="sline"></div>
    </aside>
  </div>
</template>

<style>
body { margin: 0; overflow: hidden; background: #000; }
</style>

<style scoped>
* { box-sizing: border-box; }
i, em { font-style: normal; display: block; }
.ic, :deep(svg) { display: block; flex: none; overflow: visible; }
.mixed { white-space: pre; }
:deep(.lat) { font-family: "Liberation Mono", monospace; font-size: .94em; letter-spacing: -.068em; }
.desktop { display: flex; width: 1920px; height: 1080px; overflow: hidden; font: 15px/20px "Noto Sans CJK SC", sans-serif; color: #444; text-spacing-trim: space-all; }
.viewer { width: 1838px; display: flex; flex-direction: column; background: #f0f0f0; }
.vbar { height: 30px; background: #fff; display: flex; align-items: center; padding-left: 2px; border-bottom: 1px solid #d4d8d4; position: relative; }
.strip { position: absolute; left: 23px; top: 0; width: 264px; height: 2px; background: #f0e59a; border-bottom: 1px solid #c9bd72; }
.vtitle { margin-left: 5px; font: 15.700px/26px "Open Sans", "Noto Sans CJK SC", sans-serif; color: #000; white-space: nowrap; padding-bottom: 2px; }
.vbtns { margin-left: auto; display: flex; width: 154px; justify-content: space-between; padding: 0 24px 0 0; color: #000; align-items: center; }
.vbody { flex: 1; display: flex; min-height: 0; }
.canvas { width: 1818px; border-right: 1px solid #fff; border-bottom: 1px solid #fff; }
.remote { width: 1708px; height: 959px; display: flex; flex-direction: column; }
.vsb { width: 20px; border-right: 1px solid #ddd; display: flex; flex-direction: column; align-items: center; padding: 7px 0 8px; color: #555; }
.vsb i { width: 18px; height: 753px; background: #cdcdcd; margin-top: 7px; }
.vsb .end { margin-top: auto; }
.hsb { height: 19px; display: flex; align-items: center; padding: 0 29px 0 7px; color: #555; }
.hsb i { height: 18px; width: 1343px; margin-left: 7px; background: #cdcdcd; }
.hsb .end { margin-left: auto; }

.excel { height: 909px; background: #fff; position: relative; display: flex; flex-direction: column; overflow: hidden; }
.xtitle { height: 30px; display: flex; border-top: 1px solid #bbb; }
.qat { width: 161px; display: flex; align-items: center; padding: 0 0 3px 1px; flex: none; }
.qat .sp { width: 1px; height: 17px; background: #999; margin: 0 9px 0 5px; }
.qat svg:nth-child(4) { margin-left: 11px; }
.qat .a1 { margin: 0 11px 0 6px; color: #222; }
.qat .a2 { margin: 0 3px 0 5px; color: #bbb; }
.qat .sp + svg:last-child { margin-left: -4px; }
.red { width: 1361px; height: 29px; background: linear-gradient(#fa2020, #e81010 50%, #d60000); color: #4a0808; text-align: center; font: 15.400px/28px "Open Sans", "Noto Sans CJK SC", sans-serif; text-indent: 25px; white-space: nowrap; }
.xbtns { width: 186px; display: flex; align-items: center; justify-content: space-between; padding: 2px 25px 0 35px; color: #333; }
.tabs { height: 35px; display: flex; border-bottom: 1px solid #a9adb2; font-size: 15px; line-height: 33px; }
.file { width: 70px; height: 34px; background: radial-gradient(ellipse at 50% 100%, #4aa32c, #2b8428 60%, #257a2c); color: #fff; text-align: center; border-radius: 3px 3px 0 0; box-shadow: 0 0 3px #b8e0a0; line-height: 33px; }
.tab.on { width: 62px; height: 35px; margin-left: 6px; border: 1px solid #a9adb2; border-bottom: 0; background: #fff; border-radius: 4px 4px 0 0; text-align: center; padding-right: 3px; line-height: 31px; color: #555; }
.menu { display: flex; gap: 35px; margin-left: 18px; color: #555; line-height: 33px; }
.helpers { margin: 0 6px 0 auto; display: flex; align-items: center; gap: 11.500px; height: 33px; }
.helpers svg:nth-child(-n+4) { position: relative; left: -1.500px; }

.ribbon { height: 127px; display: flex; background: linear-gradient(#fff 50%, #eceef1); }
.grp { display: flex; flex-direction: column; border-right: 1px solid #b9bdc3; box-shadow: 1px 0 #fff; flex: none; white-space: nowrap; }
.grp .body { display: flex; height: 103px; }
.grp .body.col, .col { display: flex; flex-direction: column; }
.body.col, .g3 .col { padding-top: 15px; gap: 9px; }
.line { display: flex; align-items: center; height: 32px; }
footer { position: relative; height: 20px; text-align: center; color: #6c727c; }
footer.l { padding-right: 24px; }
.la { position: absolute; right: 6px; top: 5px; }
.g1 { width: 140px; } .g2 { width: 316px; } .g3 { width: 297px; } .g4 { width: 178px; }
.g5 { width: 237px; } .g6 { width: 168px; } .g7 { width: 279px; }
.g5 footer, .g6 footer, .g7 footer { padding-left: 3px; }
.ribbon svg { color: #666; }
.big { display: flex; flex-direction: column; align-items: center; padding-top: 8px; width: 60px; height: 103px; }
.big > svg:first-child { margin-bottom: 5px; max-height: 38px; }
.big > svg.r2 { margin-left: 2px; }
.g1 .big > svg:first-child { margin-left: 2px; }
.big > span { line-height: 21px; height: 21px; }
.big > svg:last-child { margin-top: 10px; }
.big .second { display: flex; align-items: center; gap: 6px; margin-left: 3px; }
.clip { display: flex; flex-direction: column; padding-top: 3px; }
.clip div { height: 31px; display: flex; align-items: center; }
.clip b { width: 26px; display: flex; justify-content: center; padding-right: 4px; }
.ml { margin-left: 7px; }
.combo { height: 32px; border: 1px solid #cfd3d8; background: #fff; display: flex; align-items: center; justify-content: space-between; padding: 0 5px 3px 3px; color: #222; }
.fn { width: 190px; margin-left: 6px; } .fs { width: 59px; margin-left: -1px; } .nf { width: 168px; margin-left: 6px; }
.combo svg { margin-top: 2px; }
.combo em { font: 16px "Open Sans"; }
.grow, .shrink { font: bold 21px "Liberation Serif"; display: flex; margin-left: 7px; color: #333; }
.shrink { font-size: 15px; margin-left: 8px; padding-top: 4px; }
.ribbon .grow svg, .ribbon .shrink svg { color: #4468a8; margin-top: -1px; }
.shrink svg { margin-top: -5px; }
.g2 .line + .line { padding-left: 6px; height: 34px; }
.slot { display: flex; justify-content: center; align-items: center; }
.fB, .fI, .fU { font: bold 18px "Liberation Serif"; color: #222; }
.fI { font-style: italic; } .fU { text-decoration: underline; }
.sep { width: 1px; height: 25px; background: #d3d7dc; }
.tall { height: 67px; margin: 17px 5px 0 6px; }
.wen { width: 24px; display: flex; flex-direction: column; align-items: center; line-height: 14px; color: #999; font-size: 15px; margin-left: 1px; }
.wen small { font: 11px/10px "Open Sans"; letter-spacing: -.3px; }
.ribbon svg.pale { margin-left: 7px; color: #bbb; }
.g3 .alg { width: 161px; padding-left: 8px; flex: none; }
.s28 { width: 28px; height: 28px; display: flex; align-items: center; justify-content: center; margin-right: .500px; }
.alg .line .sep { margin: 0 11px 0 5px; }
.hot { background: linear-gradient(#fbd667, #ffdf71); border: 1px solid #c29a44; border-radius: 3px; }
.ori { margin-right: 3px; } .ind { margin-left: 4px; }
.wrapbtn { width: 93px; height: 28px; display: flex; align-items: center; padding-left: 3px; gap: 2px; background: linear-gradient(#fbd35e, #ffe67c); border: 1px solid #c29a44; border-radius: 3px; }
.g3 .tall { margin-right: 4px; }
.mrg { color: #999; padding-left: 3px; gap: 3px; }
.ribbon .mrg svg:last-child { color: #bbb; margin-left: 3px; }
.num { padding-left: 10px; }
.num svg:nth-child(2) { margin: 0 11px 0 5px; }
.pct { font: 17px "Open Sans"; width: 34px; } .comma { font: bold 26px/10px "Liberation Serif"; height: 22px; width: 21px; }
.num .sep { margin: 0 12px 0 0; }
.num svg:last-child { margin-left: 8px; }
.w78 { width: 78px; } .w65 { width: 65px; } .w96 { width: 96px; } .w81 { width: 82px; }
.g5 .body { padding-left: 1px; }
.g6 .body { padding-left: 5px; } .g6 .big { width: 52px; }
.edit { width: 110px; padding: 2px 0 0 10px; }
.edit div { height: 27.500px; display: flex; align-items: center; }
.edit b { width: 24px; display: flex; }
.edit svg { margin-left: 7px; } .edit b svg { margin-left: 1px; }
.edit .dim b svg { margin-left: 3px; }
.edit .dim { color: #999; }

.gap { height: 6px; border-top: 1px solid #82878d; border-bottom: 1px solid #a4a9ae; background: #d4d8dc; }
.formula { height: 89px; display: flex; }
.left { width: 296px; background: #dde1e7; border-right: 1px solid #888e96; border-left: 1px solid #888e96; }
.name { height: 23px; border-bottom: 1px solid #a7adb5; background: #fff; display: flex; align-items: center; color: #222; font: 19px "Liberation Serif", serif; }
.name > span { width: 174px; text-align: center; }
.name svg { margin: 0 11px 0 9px; }
.fx { flex: 1; height: 22px; background: #dde1e7; border-left: 1px solid #a7adb5; border-radius: 11px 0 0 11px; display: flex; justify-content: space-between; padding: 0 7px 0 4px; }
.fx i { width: 11px; height: 11px; margin-top: 5px; border-radius: 50%; background: radial-gradient(#f4f6f8, #bfc4cb); }
.fx em { font: italic bold 17px/20px "Liberation Serif"; }
.fx small { font-size: 14px; }
.input { flex: 1; }
.fscroll { width: 20px; background: #dde1e8; display: flex; flex-direction: column; align-items: center; color: #8b9097; padding-bottom: 7px; }
.fscroll div { width: 19px; height: 23px; border: 1px solid #a8adb4; display: flex; align-items: center; justify-content: center; color: #555; margin-bottom: 7px; }
.fscroll .dd { margin-top: auto; }
.g2nd { border-color: #8d9299; background: #f0f2f5; height: 7px; }

.sheetwrap { height: 568px; display: flex; background: #dde1e7; }
.sheet { width: 1683px; overflow: hidden; background: #fff; color: #000; }
.row { display: grid; grid-template-columns: 32px 109px 74px 343.500px 142.500px 127px 131px 122px 120px 102px 319px 61px; height: 47.530px; }
.row > div { border-right: 1px solid #d3d4d6; border-bottom: 1px solid #d3d4d6; display: flex; align-items: center; justify-content: center; white-space: nowrap; min-width: 0; padding-top: 1px; }
.row .rn { background: #dde1e7; border-color: #9a9fa8; align-items: flex-end; color: #444; font-size: 17px; line-height: 14px; }
.row > div.b { overflow: hidden; justify-content: flex-start; }
.row:nth-child(-n+7) > div.b { justify-content: center; }
.row > div.over { justify-content: flex-start; border-right-color: transparent; clip-path: inset(0 -200px 0 0); }
.row > div.cut { text-indent: -10px; }
.row.hd { height: 19px; }
.row.hd > div { background: #dde1e7; border-color: #9a9fa8; color: #333; padding: 0; line-height: 17px; align-items: flex-start; }
.row.hd .rn { align-items: center; justify-content: flex-end; padding-right: 5px; }
.row.hd > div.sel { background: #ffd55c; border-color: #d29a3c; }
.row.top { height: 58.500px; }
.row.top > div:not(.rn) { background: #ff0; border-right: 1px solid #33330a; border-bottom: 2px solid #8d8d1c; padding-top: 4px; }
.row.top > div.ans { flex-direction: column; padding-top: 2px; }
.row.top > div.k { justify-content: flex-start; padding-left: 21px; overflow: hidden; border-right: 0; }
.ans p { margin: 0; height: 18.500px; line-height: 18px; } .ans b { letter-spacing: 1px; } .r { color: #f00; }
.ans b :deep(.lat) { font-size: 1em; letter-spacing: -.033em; }
.vs { width: 20px; display: flex; flex-direction: column; align-items: center; color: #555; padding: 8px 0 7px; }
.thumb { width: 18px; height: 250px; margin-top: 7px; border: 1px solid #989da8; background: linear-gradient(90deg, #f6f7fa, #dfe2ea); display: flex; justify-content: center; align-items: center; border-radius: 1px; }
.thumb i { width: 10px; height: 9px; background: repeating-linear-gradient(#8c929c 0 1px, #f4f5f8 1px 3px); }
.vs .end { margin-top: auto; }
.edge { width: 5px; background: #f4f5f7; border-left: 1px solid #777c84; }
.stabs { height: 20px; display: flex; background: #dde1e7; border-top: 1px solid #8a8f97; border-bottom: 1px solid #8a8f97; font-size: 17.300px; line-height: 17px; color: #444; white-space: nowrap; }
.nav { width: 79px; display: flex; align-items: center; padding: 0 8px 0 7px; justify-content: space-between; background: #d5dae1; }
.st.act { background: #fff; padding-left: 11px; width: 85px; }
.st { width: 93px; }
.stabs svg + .st:not(.act) { margin-left: -2px; }
.st.n2 { width: 40px; } .st.n3 { width: 92px; }
.s5 { margin-left: 2px; }
.hs { margin-left: auto; width: 698px; display: flex; align-items: center; color: #444; }
.split { width: 10px; height: 18px; border: 2px solid #8c9198; background: linear-gradient(90deg, #fff 40%, #888 40% 60%, #fff 60%); margin-right: 6px; }
.hthumb { width: 465px; height: 18px; margin-left: 9px; border: 1px solid #989da8; background: linear-gradient(#f1f3f7, #d9dde6); display: flex; align-items: center; justify-content: center; }
.hthumb i { width: 9px; height: 9px; background: repeating-linear-gradient(90deg, #8c929c 0 1px, #f0f1f5 1px 3px); }
.hs .end { margin-left: auto; margin-right: 32px; }
.status { height: 27px; display: flex; align-items: center; background: linear-gradient(#e3e5e9, #b8bdc3); padding-left: 10px; color: #444; }
.status > span { padding-bottom: 2px; }
.status > i { width: 1px; height: 24px; background: #999ea5; margin-left: 11px; }
.views { margin-left: auto; display: flex; align-items: center; gap: 3px; width: 60px; border-left: 1px solid #999ea5; padding-left: 4px; height: 25px; }
.views .hot { width: 24px; height: 24px; display: flex; align-items: center; justify-content: center; }
.ime { width: 248px; height: 27px; background: #fff; display: flex; padding-left: 28px; color: #1f6fc0; --sw: 2.600; }
.ime span { width: 27.500px; display: flex; align-items: center; justify-content: center; }
.sg { position: absolute; left: 1450px; top: 876px; }
.wall { position: absolute; left: 0; top: 340px; width: 3px; height: 565px; background: linear-gradient(#35b86c, #2a9b72 50%, #1c6566); }
.lyric { position: absolute; left: 58px; top: 123px; font: 500 24px/30px "Noto Sans CJK SC"; letter-spacing: 1.600px; white-space: nowrap; color: #3c97e6; transform: skewX(-12deg); text-shadow: 1px 1px #0b1a2c, -1px -1px #0b1a2c, 1px -1px #0b1a2c, -1px 1px #0b1a2c, 2px 2px 2px #333; }
.cur { position: absolute; left: 1233px; top: 609px; }

.rtask { height: 50px; display: flex; background: radial-gradient(ellipse 150px 40px at 1425px 10px, #33260c, transparent), linear-gradient(90deg, #020911, #020a12 65%, #050505 88%, #000); color: #eee; }
.app { width: 61.200px; display: flex; align-items: center; justify-content: center; border-bottom: 3px solid transparent; flex: none; padding-top: 2px; position: relative; }
.app.win, .app.cortana, .app.task { padding-right: 4px; }
.app.run::after { content: ""; position: absolute; left: 5px; right: 5px; bottom: -3px; height: 3px; background: #76b9ed; }
.app.act { background: #343d45; } .app.act::after { left: 0; right: 0; }
.tray { display: flex; margin-left: 159px; width: 472px; flex: none; }
.tray span { width: 30px; flex: none; display: flex; align-items: center; justify-content: center; }
.tray .people { margin-right: 15px; } .tray .mute { margin-right: 5px; } .tray .pen { margin-right: 4px; } .tray .zh { margin-right: 6px; } .tray .sogou { margin-right: 15px; }
.clock { width: 92px; flex: none; border-right: 1px solid #555; text-align: center; font: 16px/25px "Open Sans", sans-serif; padding-top: 1px; white-space: nowrap; }

.side { width: 82px; background: #000; color: #fff; display: flex; flex-direction: column; flex: none; }
.si { display: flex; align-items: center; justify-content: center; flex: none; gap: 4px; font: 16px "Open Sans"; }
.si.play { margin: 8px 0 11px; border-right: 3px solid #fff000; background: linear-gradient(90deg, #5c5810 24px, #1b1b1b 24px); }
.si.play svg { margin-left: 3px; }
.si.run { border-right: 3px solid #ffc5ae; margin-bottom: 11px; padding-left: 2px; }
.si.sel { margin: -6px 0 6px; background: #333; border-right: 3px solid #ffc5ae; padding-left: 2px; }
.stray { margin-top: 157px; padding-left: 6px; display: grid; grid-template-columns: 30px 30px; grid-auto-rows: 30px; }
.stray span { display: flex; align-items: center; justify-content: center; }
.stray span:nth-child(1), .stray span:nth-child(4) { grid-column: 1 / 2; }
.stray span:nth-child(2) { grid-column: 1; }
.stray span:nth-child(5) { grid-column: 1; margin: 12px 5px 0 0; } .stray span:nth-child(6) { margin: 12px 0 0 4px; }
.sclock { margin-top: 50px; text-align: center; font: 15.500px/22px "Open Sans"; }
.snote { margin-top: 46px; display: flex; justify-content: center; }
.sline { margin-top: auto; height: 6px; border-top: 1px solid #666; }
</style>
